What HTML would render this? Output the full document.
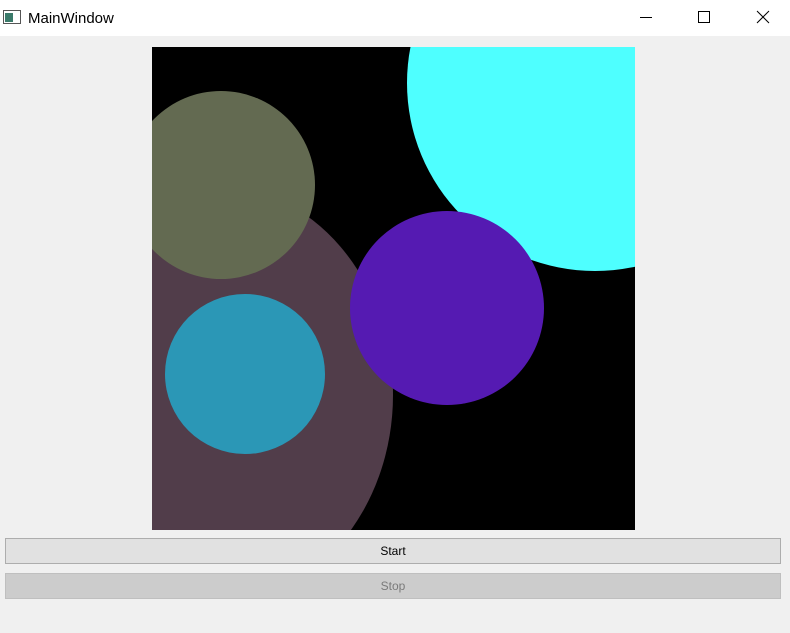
<!DOCTYPE html>
<html><head><style>
body{margin:0;width:790px;height:633px;background:#f0f0f0;font-family:"Segoe UI","Liberation Sans",sans-serif;position:relative;overflow:hidden}
.title{position:absolute;left:0;top:0;width:790px;height:36px;background:#fff}
.title span{position:absolute;left:28px;top:10px;font-size:15px;color:#000}
.btn{position:absolute;left:5px;width:774px;height:24px;border:1px solid #adadad;font-size:12px;text-align:center;line-height:25px}
</style></head><body>
<div class="title">
<svg style="position:absolute;left:3px;top:10px" width="18" height="15"><rect x="0.5" y="0.5" width="17" height="13" fill="#fff" stroke="#555"/><rect x="2" y="3" width="8" height="9" fill="#3a7a6a"/></svg>
<span>MainWindow</span>
<svg style="position:absolute;left:630px;top:8px" width="150" height="20">
<line x1="10" y1="9.5" x2="22" y2="9.5" stroke="#000"/>
<rect x="68.5" y="3.5" width="11" height="11" fill="none" stroke="#000"/>
<line x1="127" y1="3" x2="139" y2="15" stroke="#000"/><line x1="139" y1="3" x2="127" y2="15" stroke="#000"/>
</svg>
</div>
<svg style="position:absolute;left:152px;top:47px" width="483" height="483">
<rect width="483" height="483" fill="#000"/>
<circle cx="443" cy="36" r="188" fill="#4effff"/>
<ellipse cx="61" cy="348" rx="180" ry="210" fill="#513d4a"/>
<circle cx="69" cy="138" r="94" fill="#636a51"/>
<circle cx="93" cy="327" r="80" fill="#2b97b6"/>
<circle cx="295" cy="261" r="97" fill="#551ab2"/>
</svg>
<div class="btn" style="top:538px;background:#e1e1e1;color:#000">Start</div>
<div class="btn" style="top:573px;background:#cccccc;color:#7a7a7a;border-color:#bfbfbf">Stop</div>
</body></html>
